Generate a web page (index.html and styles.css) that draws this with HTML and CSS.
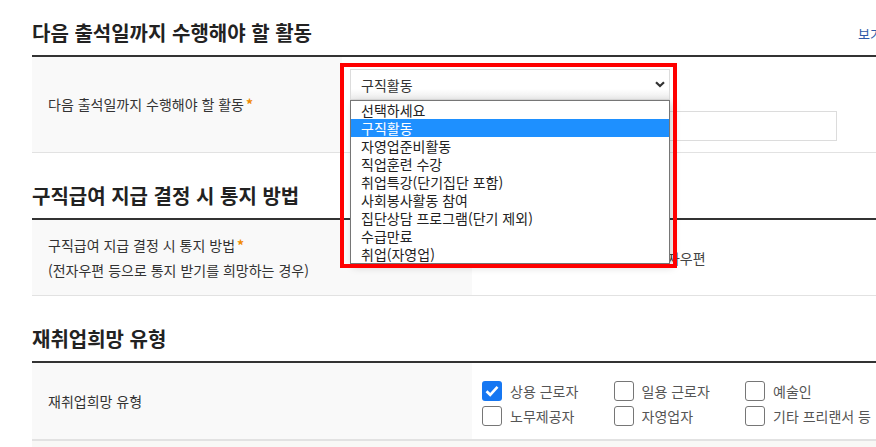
FILE: index.html
```html
<!DOCTYPE html>
<html lang="ko">
<head>
    <meta charset="UTF-8">
    <meta name="viewport" content="width=device-width, initial-scale=1.0">
    <title>실업인정 신청</title>
    <link rel="stylesheet" href="styles.css">
</head>
<body>
    <div class="page">
        <div class="sec">
            <div class="sec-head">
                <h2>다음 출석일까지 수행해야 할 활동</h2>
                <a href="#" class="more">보기</a>
            </div>
            <div class="row row-activity">
                <div class="th">
                    <p>다음 출석일까지 수행해야 할 활동<span class="req">*</span></p>
                </div>
                <div class="td td-stack">
                    <div class="select-wrap">
                        <div class="select">
                            <span>구직활동</span>
                            <svg class="chev" width="10" height="7" viewBox="0 0 10 7"><path d="M1 1.2 L5 5 L9 1.2" fill="none" stroke="#333" stroke-width="2.2"/></svg>
                        </div>
                        <ul class="options">
                            <li>선택하세요</li>
                            <li class="on">구직활동</li>
                            <li>자영업준비활동</li>
                            <li>직업훈련 수강</li>
                            <li>취업특강(단기집단 포함)</li>
                            <li>사회봉사활동 참여</li>
                            <li>집단상담 프로그램(단기 제외)</li>
                            <li>수급만료</li>
                            <li>취업(자영업)</li>
                        </ul>
                        <div class="mark"></div>
                    </div>
                    <input type="text" class="text-input">
                </div>
            </div>
        </div>

        <div class="sec">
            <div class="sec-head">
                <h2>구직급여 지급 결정 시 통지 방법</h2>
            </div>
            <div class="row row-notice">
                <div class="th">
                    <p>구직급여 지급 결정 시 통지 방법<span class="req">*</span></p>
                    <p>(전자우편 등으로 통지 받기를 희망하는 경우)</p>
                </div>
                <div class="td">
                    <label class="radio"><span class="dot checked"></span>모바일 알림톡 수신</label>
                    <label class="radio"><span class="dot"></span>전자우편</label>
                </div>
            </div>
        </div>

        <div class="sec">
            <div class="sec-head">
                <h2>재취업희망 유형</h2>
            </div>
            <div class="row row-last">
                <div class="th">
                    <p>재취업희망 유형</p>
                </div>
                <div class="td">
                    <div class="checks">
                        <label class="check"><span class="box checked"><svg width="14" height="12" viewBox="0 0 14 12"><path d="M1.5 6.2 L5.2 9.8 L12.5 1.8" fill="none" stroke="#fff" stroke-width="2.6"/></svg></span>상용 근로자</label>
                        <label class="check"><span class="box"></span>일용 근로자</label>
                        <label class="check"><span class="box"></span>예술인</label>
                        <label class="check"><span class="box"></span>노무제공자</label>
                        <label class="check"><span class="box"></span>자영업자</label>
                        <label class="check"><span class="box"></span>기타 프리랜서 등</label>
                    </div>
                </div>
            </div>
            <div class="next-area"></div>
        </div>
    </div>
</body>
</html>
```

FILE: styles.css
```css
body {
    margin: 0;
    font-family: "Noto Sans CJK KR", sans-serif;
    color: #333;
    background-color: #fff;
    overflow: hidden;
}
.page {
    width: 860px;
    margin-left: 32px;
    padding-top: 18px;
}
.sec + .sec {
    margin-top: 28px;
}
.sec-head {
    display: flex;
    justify-content: space-between;
    align-items: center;
    padding-bottom: 7px;
    border-bottom: 2px solid #333;
}
.sec-head h2 {
    margin: 0;
    font-size: 20px;
    line-height: 30px;
    font-weight: bold;
    color: #222;
}
.more {
    font-size: 13px;
    color: #2f5aa8;
    text-decoration: none;
    margin-right: 10px;
}
.row {
    display: flex;
    border-bottom: 1px solid #e2e2e2;
}
.row-last {
    border-bottom: 2px solid #e2e2e2;
}
.th {
    width: 440px;
    flex: none;
    box-sizing: border-box;
    padding: 12px 16px;
    background-color: #f9f9f9;
    display: flex;
    flex-direction: column;
    justify-content: center;
    font-size: 14px;
    line-height: 25px;
}
.th p {
    margin: 0;
}
.row-activity .th {
    width: 310px;
}
.row-notice .th {
    padding: 13px 16px 12px;
}
.req {
    color: #f08a00;
    font-weight: bold;
    margin-left: 2px;
}
.td {
    flex: 1;
    padding: 0 10px;
    display: flex;
    align-items: center;
    font-size: 14px;
}
.td-stack {
    flex-direction: column;
    align-items: flex-start;
    padding: 12px 8px 11px;
    gap: 11px;
}
.row-notice .td {
    padding: 0 12px;
}
.row-last .td {
    padding: 18px 10px 13px;
}

/* select + opened list */
.select-wrap {
    position: relative;
}
.select {
    width: 320px;
    height: 31px;
    box-sizing: border-box;
    border: 1px solid #dcdcdc;
    background: linear-gradient(#fff 65%, #ececec);
    display: flex;
    justify-content: space-between;
    align-items: center;
    padding: 0 4px 0 10px;
}
.options {
    position: absolute;
    top: 31px;
    left: 0;
    width: 320px;
    box-sizing: border-box;
    margin: 0;
    padding: 0;
    list-style: none;
    background-color: #fff;
    border: 1px solid #767676;
    box-shadow: 3px 3px 8px rgba(0,0,0,0.18);
    z-index: 2;
}
.options li {
    height: 18px;
    line-height: 18px;
    padding-left: 10px;
    color: #222;
}
.options li.on {
    background-color: #1e90ff;
    color: #fff;
}
.mark {
    position: absolute;
    left: -10px;
    top: -6px;
    width: 337px;
    height: 205px;
    box-sizing: border-box;
    border: 4px solid #ff0000;
    z-index: 3;
}
.text-input {
    width: 487px;
    height: 30px;
    box-sizing: border-box;
    border: 1px solid #dcdcdc;
    margin: 0;
}

/* radios */
.radio {
    display: flex;
    align-items: center;
    gap: 6px;
    width: 148px;
    color: #444;
}
.dot {
    width: 16px;
    height: 16px;
    box-sizing: border-box;
    border: 1px solid #767676;
    border-radius: 50%;
    background-color: #fff;
}
.dot.checked {
    border: 2px solid #1a73e8;
    box-shadow: inset 0 0 0 3px #fff;
    background-color: #1a73e8;
}

/* checkboxes */
.checks {
    display: grid;
    grid-template-columns: repeat(3, 131.5px);
    row-gap: 5px;
}
.check {
    display: flex;
    align-items: center;
    gap: 8px;
    color: #555;
}
.box {
    width: 20px;
    height: 20px;
    box-sizing: border-box;
    border: 1px solid #767676;
    border-radius: 3px;
    display: flex;
    align-items: center;
    justify-content: center;
}
.box.checked {
    border: none;
    background-color: #1677f2;
}
.next-area {
    height: 20px;
    background-color: #f8f8f6;
}
```
